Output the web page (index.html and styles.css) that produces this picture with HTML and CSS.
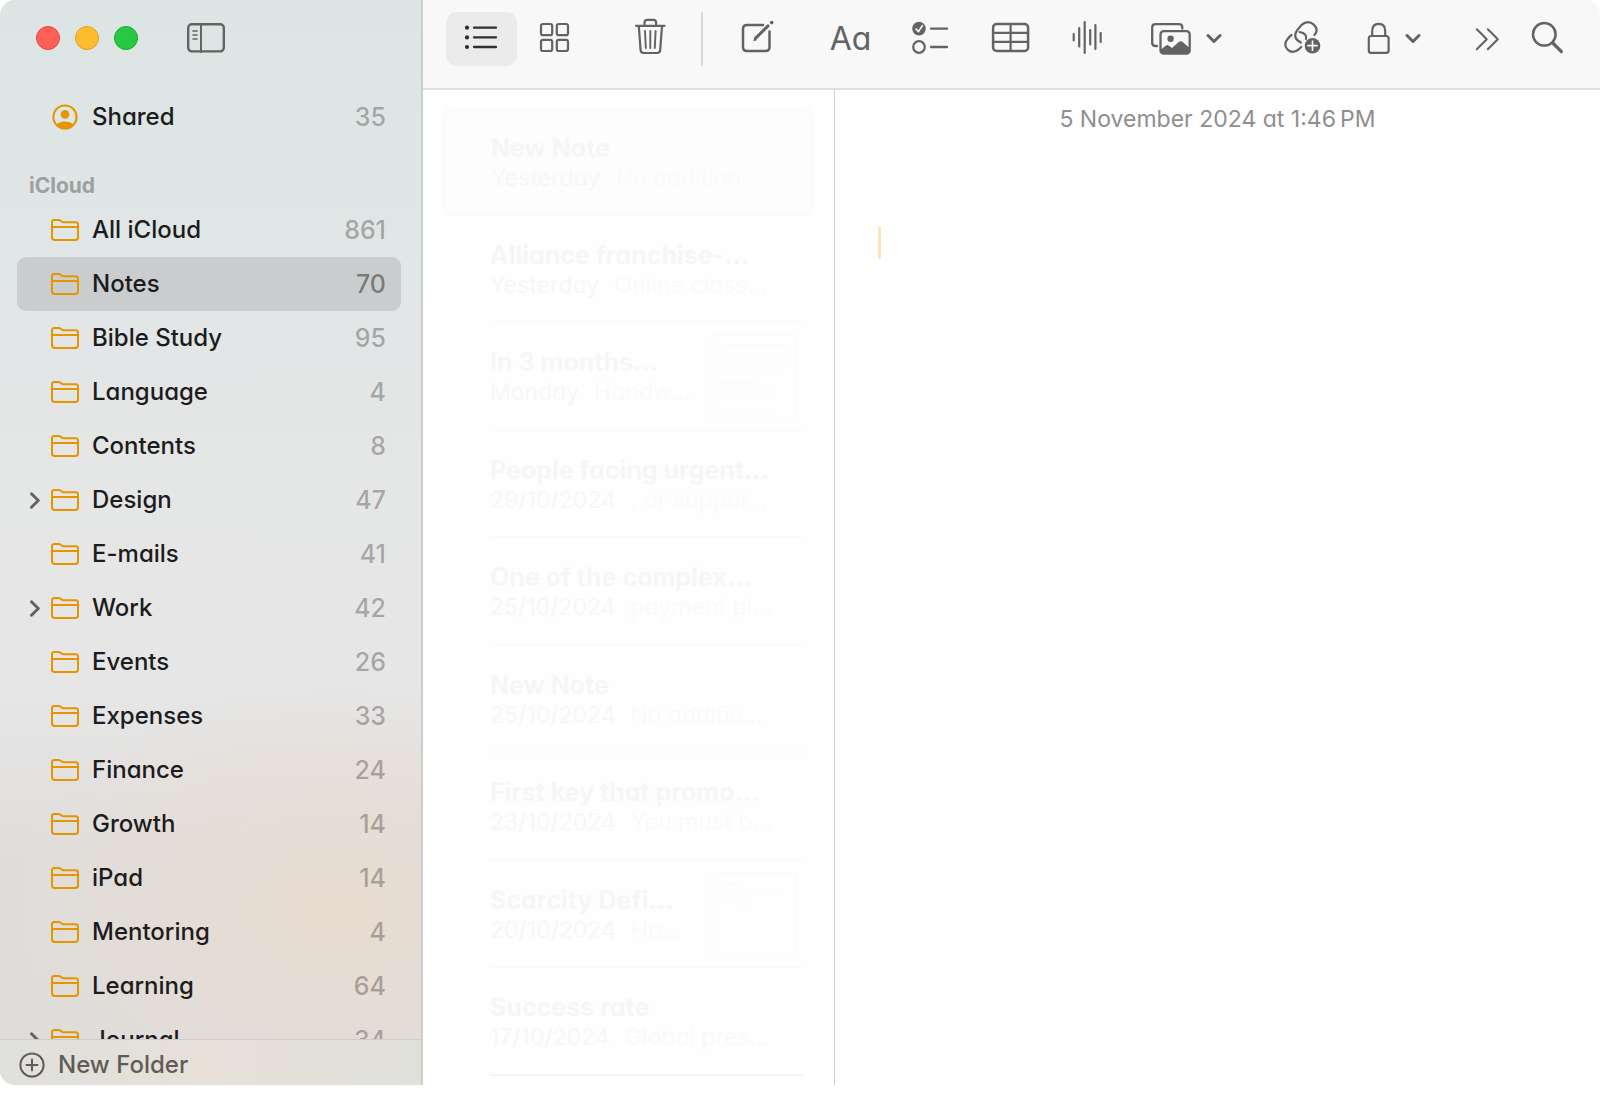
FILE: index.html
```html
<!DOCTYPE html>
<html lang="en">
<head>
<meta charset="utf-8">
<title>Notes</title>
<link rel="stylesheet" href="styles.css">
</head>
<body>
<svg class="sprite" aria-hidden="true">
  <symbol id="folder" viewBox="0 0 28 22"><path d="M1 18.2V3.4Q1 1 3.4 1h4.4q1 0 1.8.7l1 .8q.8.7 1.8.7h12.2Q27 3.2 27 5.6v12.6q0 2.8-2.6 2.8H3.6Q1 21 1 18.2zM1 8h26"/></symbol>
  <symbol id="disclose" viewBox="0 0 10 17"><path d="M1.5 1.8 8.3 8.5 1.5 15.2"/></symbol>
  <symbol id="down" viewBox="0 0 16 40"><path d="M2 16.5l6 6 6-6"/></symbol>
</svg>
<div class="window">
  <aside class="sidebar">
    <header class="titlebar">
      <button class="light red" aria-label="Close"></button>
      <button class="light yellow" aria-label="Minimise"></button>
      <button class="light green" aria-label="Zoom"></button>
      <button class="toggle" aria-label="Toggle sidebar">
        <svg width="38" height="30" viewBox="0 0 38 30"><rect x="1.2" y="1.2" width="35.6" height="27.2" rx="3.6" stroke-width="2.4"/><path d="M14 1v28" stroke-width="2"/><path d="M6 8h4M6 12h4M6 16h4" stroke-width="1.6"/></svg>
      </button>
    </header>
    <nav class="folders" aria-label="Folders">
      <a class="row" href="#"><span class="twist"></span><svg class="person" viewBox="0 0 26 26"><circle cx="13" cy="13" r="11.6" fill="none" stroke="#e69500" stroke-width="2"/><circle cx="13" cy="10.4" r="4.3"/><path d="M4.2 20.6Q8 17.4 13 17.4t8.8 3.2Q18 25 13 25t-8.800-4.400z"/></svg><span class="name">Shared</span><span class="count">35</span></a>
      <h2 class="heading">iCloud</h2>
      <a class="row" href="#"><span class="twist"></span><svg class="folder"><use href="#folder"/></svg><span class="name">All iCloud</span><span class="count">861</span></a>
      <a class="row selected" href="#"><span class="twist"></span><svg class="folder"><use href="#folder"/></svg><span class="name">Notes</span><span class="count">70</span></a>
      <a class="row" href="#"><span class="twist"></span><svg class="folder"><use href="#folder"/></svg><span class="name">Bible Study</span><span class="count">95</span></a>
      <a class="row" href="#"><span class="twist"></span><svg class="folder"><use href="#folder"/></svg><span class="name">Language</span><span class="count">4</span></a>
      <a class="row" href="#"><span class="twist"></span><svg class="folder"><use href="#folder"/></svg><span class="name">Contents</span><span class="count">8</span></a>
      <a class="row" href="#"><span class="twist"><svg><use href="#disclose"/></svg></span><svg class="folder"><use href="#folder"/></svg><span class="name">Design</span><span class="count">47</span></a>
      <a class="row" href="#"><span class="twist"></span><svg class="folder"><use href="#folder"/></svg><span class="name">E-mails</span><span class="count">41</span></a>
      <a class="row" href="#"><span class="twist"><svg><use href="#disclose"/></svg></span><svg class="folder"><use href="#folder"/></svg><span class="name">Work</span><span class="count">42</span></a>
      <a class="row" href="#"><span class="twist"></span><svg class="folder"><use href="#folder"/></svg><span class="name">Events</span><span class="count">26</span></a>
      <a class="row" href="#"><span class="twist"></span><svg class="folder"><use href="#folder"/></svg><span class="name">Expenses</span><span class="count">33</span></a>
      <a class="row" href="#"><span class="twist"></span><svg class="folder"><use href="#folder"/></svg><span class="name">Finance</span><span class="count">24</span></a>
      <a class="row" href="#"><span class="twist"></span><svg class="folder"><use href="#folder"/></svg><span class="name">Growth</span><span class="count">14</span></a>
      <a class="row" href="#"><span class="twist"></span><svg class="folder"><use href="#folder"/></svg><span class="name">iPad</span><span class="count">14</span></a>
      <a class="row" href="#"><span class="twist"></span><svg class="folder"><use href="#folder"/></svg><span class="name">Mentoring</span><span class="count">4</span></a>
      <a class="row" href="#"><span class="twist"></span><svg class="folder"><use href="#folder"/></svg><span class="name">Learning</span><span class="count">64</span></a>
      <a class="row" href="#"><span class="twist"><svg><use href="#disclose"/></svg></span><svg class="folder"><use href="#folder"/></svg><span class="name">Journal</span><span class="count">34</span></a>
    </nav>
    <button class="new-folder"><svg width="26" height="26" viewBox="0 0 26 26"><circle cx="13" cy="13" r="11.6"/><path d="M13 7.5v11M7.5 13h11"/></svg>New Folder</button>
  </aside>
  <div class="content">
    <header class="toolbar">
      <button class="tool active" aria-label="List view"><svg width="34" height="40" viewBox="465 19 34 40"><path d="M474 27.7h22M474 37.4h22M474 47h22" stroke="#2e2e2e" stroke-width="2.3"/><g fill="#2e2e2e" stroke="none"><circle cx="467" cy="27.7" r="2.1"/><circle cx="467" cy="37.4" r="2.1"/><circle cx="467" cy="47" r="2.1"/></g></svg></button>
      <button class="tool" aria-label="Gallery view"><svg width="30" height="40" viewBox="540 19 30 40"><g stroke-width="2.2"><rect x="541" y="24" width="11.2" height="11.2" rx="2"/><rect x="556.8" y="24" width="11.2" height="11.2" rx="2"/><rect x="541" y="39.8" width="11.2" height="11.2" rx="2"/><rect x="556.8" y="39.8" width="11.2" height="11.2" rx="2"/></g></svg></button>
      <button class="tool trash" aria-label="Delete"><svg width="32" height="40" viewBox="634 19 32 40"><path d="M636 25.8h28.5M638.8 26l1.8 24.2q.2 2.8 3 2.8h13.6q2.8 0 3-2.8L662 26M644.5 25.5v-3q0-2.700 2.700-2.700h6.200q2.700 0 2.700 2.700v3" stroke-width="2.2"/><path d="M645 31l.8 17M650.3 31v17M655.6 31l-.8 17" stroke-width="1.9"/></svg></button>
      <span class="rule"></span>
      <button class="tool compose" aria-label="New note"><svg width="32" height="40" viewBox="742 19 32 40"><path d="M763 25h-16q-4 0-4 4v18q0 4 4 4h18.500q4 0 4-4V31.500" stroke-width="2.500"/><path d="M755.500 38.400l12.500-12.500" stroke-width="3"/><path d="M753.300 41.300l1-3.500 2.500 2.500z" fill="#636363" stroke="none"/><circle cx="771.700" cy="22.600" r="1.800" fill="#636363" stroke="none"/></svg></button>
      <button class="tool format" aria-label="Format">Aa</button>
      <button class="tool near" aria-label="Checklist"><svg width="37" height="40" viewBox="912 19 37 40"><circle cx="919" cy="28.600" r="6.800" fill="#636363" stroke="none"/><path d="M916 29l2.400 2.600 4-6" stroke="#f8f8f8" stroke-width="1.700"/><circle cx="919" cy="47" r="5.800" stroke-width="2.200"/><path d="M931 28.700h16M931 47h16" stroke-width="2.300"/></svg></button>
      <button class="tool near" aria-label="Table"><svg width="38" height="40" viewBox="992 19 38 40"><rect x="993.100" y="24.100" width="35" height="26.800" rx="3.500" stroke-width="2.500"/><path d="M1010.600 24v27M993 32.900h35M993 41.900h35" stroke-width="2.200"/></svg></button>
      <button class="tool wave" aria-label="Record audio"><svg width="30" height="40" viewBox="1072 19 30 40"><path d="M1073.700 34v6.500M1079.200 28v18.500M1084.700 22v31M1090.200 30v14.500M1095.400 25v24M1100.700 33v9" stroke-width="2.200"/></svg></button>
      <button class="tool menu photo" aria-label="Media"><svg width="41" height="40" viewBox="1151 19 41 40"><path d="M1157 46h-1.500q-3.300 0-3.300-3.300V27.500q0-3.300 3.300-3.300h23.500q3.300 0 3.300 3.300v1" stroke-width="2.300"/><rect x="1160.500" y="31.200" width="29.200" height="22.500" rx="3.300" stroke-width="2.300"/><circle cx="1170.600" cy="38.800" r="3.200" fill="#636363" stroke="none"/><path d="M1161 49.500l5-4q1.500-1 3 .2l3 2.300 7-6.200q1.700-1.300 3.300 0l7 6v4q0 1.500-2 1.500h-24.500q-1.800 0-1.800-2z" fill="#636363" stroke="none"/></svg><svg class="caret"><use href="#down"/></svg></button>
      <button class="tool link" aria-label="Add link"><svg width="38" height="40" viewBox="1284 19 38 40"><path d="M1300.800 42.600q-9-4.600-3.500-12.600l4-4.800q6.500-5.700 12.500-.6 5.300 5.300.6 10.400" stroke-width="2.200"/><path d="M1291.500 34.900l-3.500 3.500q-5.300 6-.4 11.200 5.400 4.800 11.400-.4l2.200-2.200M1299.500 32q8 1.500 6.500 7" stroke-width="2.200"/><circle cx="1312.500" cy="45.700" r="7.800" fill="#636363" stroke="none"/><path d="M1312.500 41.200v9M1308 45.700h9" stroke="#f8f8f8" stroke-width="1.700"/></svg></button>
      <button class="tool menu lock" aria-label="Lock"><svg width="24" height="40" viewBox="1367 19 24 40"><rect x="1368.800" y="36" width="19.800" height="16.800" rx="2.400" stroke-width="2.200"/><path d="M1372.200 36v-5q0-7.200 6.500-7.200t6.500 7.200v5" stroke-width="2.200"/></svg><svg class="caret"><use href="#down"/></svg></button>
      <button class="tool more" aria-label="More"><svg width="24" height="40" viewBox="1475 19 24 40"><path d="M1476.800 29.300l10 10-10 10M1487.800 29.300l10 10-10 10" stroke-width="2"/></svg></button>
      <button class="tool search" aria-label="Search"><svg width="32" height="40" viewBox="1532 19 32 40"><circle cx="1544.300" cy="34.300" r="11.300" stroke-width="2.500"/><path d="M1552.800 43l8.600 8.600" stroke-width="3.200"/></svg></button>
    </header>
    <main class="panes">
      <section class="notes" aria-label="Notes">
        <article class="note current"><div class="text"><h3>New Note</h3><p><time>Yesterday</time><span>No addition…</span></p></div></article>
        <article class="note"><div class="text"><h3>Alliance franchise-…</h3><p><time>Yesterday</time><span>Online class…</span></p></div></article>
        <article class="note"><div class="text"><h3>In 3 months…</h3><p><time>Monday</time><span>Handw…</span></p></div><svg class="thumb" viewBox="0 0 84 84"><path d="M12 10h62M8 19h66M8 28h68M8 37h60M8 48h34M8 57h56M8 78h56"/></svg></article>
        <article class="note"><div class="text"><h3>People facing urgent…</h3><p><time>29/10/2024</time><span>, or suppor…</span></p></div></article>
        <article class="note"><div class="text"><h3>One of the complex…</h3><p><time>25/10/2024</time><span>payment pl…</span></p></div></article>
        <article class="note"><div class="text"><h3>New Note</h3><p><time>25/10/2024</time><span>No additio…</span></p></div></article>
        <article class="note"><div class="text"><h3>First key that promo…</h3><p><time>23/10/2024</time><span>You must b…</span></p></div></article>
        <article class="note"><div class="text"><h3>Scarcity Defi…</h3><p><time>20/10/2024</time><span>Ha…</span></p></div><svg class="thumb" viewBox="0 0 84 84"><path d="M10 10h14M10 16h62M10 20h38M10 26h24M26 33h10"/></svg></article>
        <article class="note last"><div class="text"><h3>Success rate</h3><p><time>17/10/2024</time><span>Global pres…</span></p></div></article>
      </section>
      <section class="editor" aria-label="Note">
        <time class="stamp">5 November 2024 at 1:46&#8201;PM</time>
        <div class="caret-bar"></div>
      </section>
    </main>
  </div>
</div>
</body>
</html>
```
FILE: styles.css
```css
* { box-sizing: border-box; }

body {
  margin: 0;
  padding-bottom: 10px;
  height: 100vh;
  background: #fff;
  color: #1c1c1c;
  font-family: Inter, "Liberation Sans", sans-serif;
  font-feature-settings: "cv11";
  font-size: 24px;
  line-height: 30px;
}

button {
  border: 0;
  padding: 0;
  background: none;
  color: inherit;
  font: inherit;
  font-feature-settings: inherit;
}

h2, h3, p { margin: 0; }

a { color: inherit; text-decoration: none; }

svg {
  flex: none;
  fill: none;
  stroke: #636363;
  stroke-linecap: round;
  stroke-linejoin: round;
  overflow: visible;
}

.sprite { position: absolute; width: 0; height: 0; }

.window {
  display: flex;
  height: 100%;
  border-radius: 15px;
  background: #fefefe;
  overflow: hidden;
}

/* Sidebar */
.sidebar {
  flex: none;
  display: flex;
  flex-direction: column;
  width: 423px;
  border-right: 2px solid #cbcccc;
  background:
    radial-gradient(ellipse 330px 230px at 80% 84%, #e9dcd0 0%, #e9dcd000 100%),
    linear-gradient(180deg, #dce5e4 0%, #e0e6e6 20%, #e5e6e6 42%, #e6e6e6 64%, #dfdddb 80%, #dedddb 100%);
}

.titlebar {
  flex: none;
  display: flex;
  align-items: center;
  gap: 15px;
  height: 76px;
  padding-left: 36px;
}

.light { width: 24px; height: 24px; border-radius: 50%; }
.red { background: #ff5f57; border: 1px solid #e2463f; }
.yellow { background: #febc2e; border: 1px solid #e1a116; }
.green { background: #28c840; border: 1px solid #12ac28; }

.toggle { display: flex; margin-left: 34px; }

.folders { flex: 1; min-height: 0; overflow: hidden; padding: 14px 20px 0 17px; }

.row {
  display: flex;
  align-items: center;
  height: 54px;
  padding-right: 15px;
  border-radius: 9px;
}

.selected { background: #c9cdce; }

.twist { width: 34px; padding-left: 13px; line-height: 0; }
.twist svg { width: 10px; height: 17px; stroke-width: 3; }

.folder { width: 28px; height: 22px; stroke: #e69500; stroke-width: 2; }
.person { width: 28px; height: 26px; fill: #e69500; stroke: none; }

.name { flex: 1; padding-left: 13px; font-weight: 450; }
.count { color: #1c1c1c55; font-size: 25px; font-weight: 450; }
.selected .count { color: #1c1c1c77; }

.heading {
  padding: 27px 0 2px 12px;
  color: #9ba0a0;
  font-size: 21px;
  line-height: 30px;
  font-weight: 650;
}

.new-folder {
  flex: none;
  display: flex;
  align-items: center;
  gap: 13px;
  height: 46px;
  padding: 4px 0 0 19px;
  border-top: 1px solid #cdccc9;
  background: linear-gradient(90deg, #e0e0dc, #e6e0d9 50%, #e0e0da);
  color: #5f5c58;
  font-weight: 450;
}
.new-folder svg { stroke: #5f5c58; stroke-width: 2; }

/* Toolbar */
.content { flex: 1; min-width: 0; display: flex; flex-direction: column; }

.toolbar {
  flex: none;
  display: flex;
  align-items: center;
  padding: 12px 34px 22px 23px;
  border-bottom: 2px solid #dedede;
  background: #f8f8f8;
}

.tool {
  flex: none;
  display: flex;
  align-items: center;
  justify-content: center;
  width: 71px;
  height: 54px;
  border-radius: 11px;
}

.active { margin-right: 2px; background: #ebebeb; }
.trash { margin-left: 24px; }
.rule { width: 2px; height: 54px; margin: 0 19px 0 16px; background: #dadada; }
.format { margin: 0 9px 0 22px; color: #636363; font-size: 32px; }
.near { margin-right: 9px; }
.wave { margin-left: -4px; }
.menu { justify-content: flex-start; gap: 14px; width: auto; }
.caret { width: 16px; height: 40px; stroke-width: 3; }
.photo { margin-left: 29px; }
.link { width: 38px; margin-left: auto; }
.lock { margin: 0 54px 0 45px; }
.more { width: 24px; }
.search { width: 32px; margin: 0 2px 0 33px; }

/* Notes list */
.panes { flex: 1; display: flex; min-height: 0; }

.notes {
  flex: none;
  display: grid;
  grid-auto-rows: 1fr;
  width: 412px;
  padding: 18px 20px 9px 19px;
  border-right: 1px solid #cfcfcf;
}

.note {
  display: flex;
  padding: 24px 19px 0 0;
  margin: 0 10px 0 48px;
  border-bottom: 2px solid #fbfbfb;
  white-space: nowrap;
}
.note.last { border-color: #f5f5f5; }

.note.current {
  margin: 0;
  padding-left: 48px;
  border: 1px solid #fafafa;
  border-radius: 9px;
  background: #fdfdfd;
  box-shadow: inset 0 0 8px #f9f9f9;
}

.text { flex: 1; min-width: 0; }
.note h3 { color: #f6f6f6; font-size: 25px; font-weight: 700; line-height: 30px; }
.note p { display: flex; gap: 15px; color: #fafafa; font-size: 23px; line-height: 30px; }
.note time { color: #f7f7f7; }

.thumb {
  width: 86px;
  height: 86px;
  margin: -13px -12px 0 0;
  border: 2px solid #fcfcfc;
  border-radius: 4px;
  stroke: #fcfcfc;
  stroke-width: 2;
}

/* Editor */
.editor { flex: 1; padding: 14px 0 0 43px; }
.stamp { display: block; margin-right: 43px; color: #8f8f8f; font-size: 23px; text-align: center; }
.caret-bar { width: 3px; height: 32px; margin-top: 93px; background: #fee4b8; }
```
